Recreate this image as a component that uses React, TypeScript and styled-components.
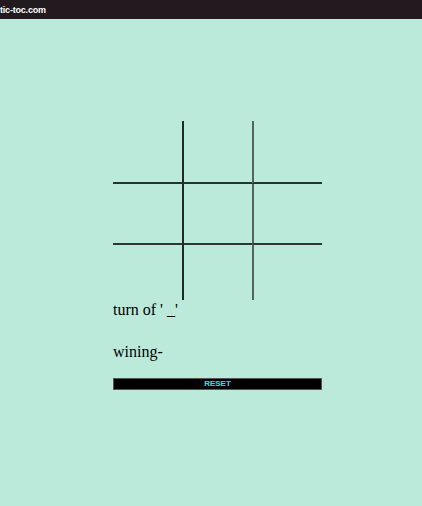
import React from "react";
import styled, { createGlobalStyle } from "styled-components";

const Global = createGlobalStyle`
  html, body { margin: 0; padding: 0; }
  body { background: #bbe9da; font-family: "Liberation Serif", "Times New Roman", serif; }
`;

const Header = styled.header`
  height: 19px;
  background: #231a1f;
  display: flex;
  align-items: center;
`;

const Brand = styled.span`
  color: #ffffff;
  font-family: "Liberation Sans", Arial, sans-serif;
  font-size: 9px;
  font-weight: bold;
  letter-spacing: -0.2px;
`;

const Main = styled.main`
  width: 209px;
  margin: 102px 0 0 113px;
  display: flex;
  flex-direction: column;
`;

const Board = styled.div`
  display: grid;
  grid-template-columns: 71px 68px 70px;
  grid-template-rows: 63px 59px 57px;
`;

const Cell = styled.div<{ $col: number; $row: number }>`
  box-sizing: border-box;
  border-right: ${(p) => (p.$col === 0 ? "2px solid #1f2a26" : "none")};
  border-left: ${(p) => (p.$col === 2 ? "2px solid #52645d" : "none")};
  border-bottom: ${(p) => (p.$row === 0 ? "2px solid #27322e" : "none")};
  border-top: ${(p) => (p.$row === 2 ? "2px solid #2c3733" : "none")};
`;

const Line = styled.p<{ $top: number }>`
  margin: ${(p) => p.$top}px 0 0 0;
  font-size: 16px;
  line-height: 18px;
  color: #000;
`;

const ResetButton = styled.button`
  margin-top: 17px;
  height: 12px;
  width: 209px;
  padding: 0;
  box-sizing: border-box;
  background: #000;
  border: 1px solid #555;
  color: #10e8ff;
  font-family: "Liberation Sans", Arial, sans-serif;
  font-size: 8px;
  font-weight: bold;
  line-height: 10px;
  display: flex;
  align-items: center;
  justify-content: center;
`;

export default function App() {
  const cells = Array.from({ length: 9 }, (_, i) => i);
  return (
    <>
      <Global />
      <Header>
        <Brand>tic-toc.com</Brand>
      </Header>
      <Main>
        <Board>
          {cells.map((i) => (
            <Cell key={i} $col={i % 3} $row={Math.floor(i / 3)} />
          ))}
        </Board>
        <Line $top={1}>turn of ' _'</Line>
        <Line $top={24}>wining-</Line>
        <ResetButton>RESET</ResetButton>
      </Main>
    </>
  );
}
